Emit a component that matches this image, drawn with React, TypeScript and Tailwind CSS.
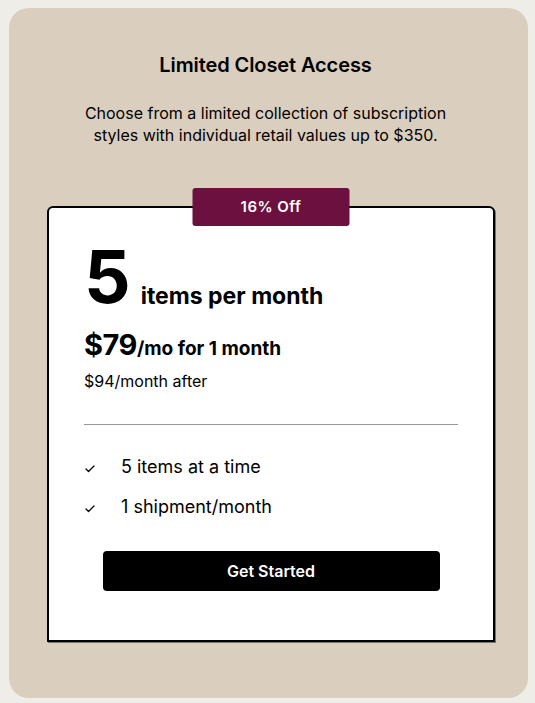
import { Check } from "lucide-react";

const features = ["5 items at a time", "1 shipment/month"];

export default function App() {
  return (
    <div className="min-h-[703px] bg-[#efede8] pt-[8px] pl-[9px] font-['Inter',sans-serif] text-black">
      <div className="w-[519px] h-[690px] rounded-[20px] bg-[#dacebe] pt-[44px]">
        {/* Heading */}
        <div className="pr-[6px] flex flex-col items-center text-center">
          <h1 className="text-[20px] leading-[26px] font-semibold tracking-[-0.1px]">Limited Closet Access</h1>
          <p className="mt-[24px] text-[16px] leading-[22px] w-[400px]">
            Choose from a limited collection of subscription styles with individual retail values up to $350.
          </p>
        </div>

        {/* Plan card */}
        <div className="relative ml-[38px] mt-[60px] w-[448px]">
          <div className="absolute left-1/2 -translate-x-1/2 -top-[18px] w-[157px] h-[38px] rounded-[3px] bg-[#6c1040] flex items-center justify-center text-white text-[15px] font-semibold tracking-[0.5px]">
            16% Off
          </div>
          <div className="h-[436px] border-2 border-black rounded-t-[6px] bg-white pt-[39px] px-[35px] shadow-[1px_1px_0_#777]">
            <div className="flex items-end">
              <span className="text-[73px] leading-[60px] font-bold tracking-[-2px]">5</span>
              <span className="ml-[12px] mb-[-3px] text-[23px] leading-[28px] font-bold">items per month</span>
            </div>
            <div className="mt-[21px] flex items-baseline font-bold">
              <span className="text-[29px] leading-[34px] tracking-[-0.5px]">$79</span>
              <span className="text-[19px] leading-[24px]">/mo for 1 month</span>
            </div>
            <p className="mt-[8px] text-[16px] leading-[22px]">$94/month after</p>
            <div className="mt-[32px] h-px bg-[#999]" />
            <ul className="mt-[30px] flex flex-col gap-[16px]">
              {features.map((f) => (
                <li key={f} className="flex items-center">
                  <Check className="w-[12px] h-[12px] mt-[3px]" strokeWidth={2.5} />
                  <span className="ml-[25px] text-[18px] leading-[24px]">{f}</span>
                </li>
              ))}
            </ul>
            <button className="mt-[32px] mx-auto block w-[337px] h-[40px] rounded-[4px] bg-black text-white text-[16px] font-semibold">
              Get Started
            </button>
          </div>
        </div>
      </div>
    </div>
  );
}
